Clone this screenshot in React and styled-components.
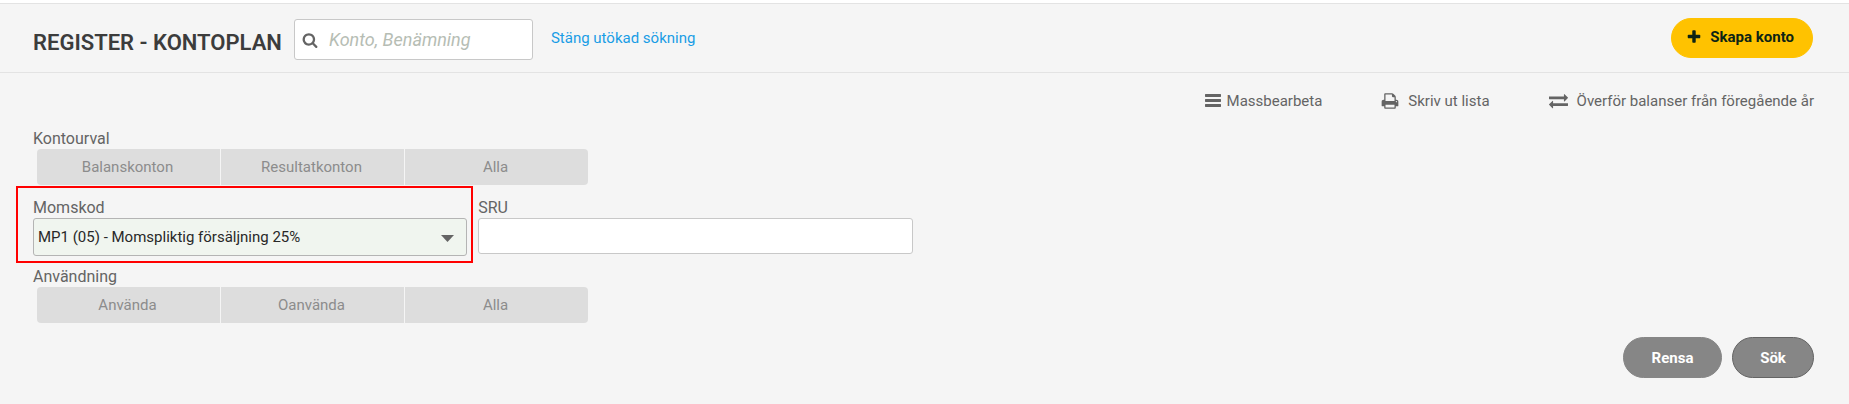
import React from 'react';
import styled, { createGlobalStyle } from 'styled-components';

const GlobalStyle = createGlobalStyle`
    * {
        box-sizing: border-box;
    }

    html {
        min-height: 100%;
        background: #f5f5f5;
    }

    body {
        margin: 0;
        color: #646464;
        font-family: Roboto, "Liberation Sans", sans-serif;
        font-size: 15px;
        line-height: 20px;
    }

    button, input, select {
        font: inherit;
        color: inherit;
    }
`;

const icons = {
    search: 'M1216 832q0-185-131.5-316.5t-316.5-131.5-316.5 131.5-131.5 316.5 131.5 316.5 316.5 131.5 316.5-131.5 131.5-316.5zm512 832q0 52-38 90t-90 38q-54 0-90-38l-343-342q-179 124-399 124-143 0-273.5-55.5t-225-150-150-225-55.5-273.5 55.5-273.5 150-225 225-150 273.5-55.5 273.5 55.5 225 150 150 225 55.5 273.5q0 220-124 399l343 343q37 37 37 90z',
    plus: 'M1600 736v192q0 40-28 68t-68 28h-416v416q0 40-28 68t-68 28h-192q-40 0-68-28t-28-68v-416h-416q-40 0-68-28t-28-68v-192q0-40 28-68t68-28h416v-416q0-40 28-68t68-28h192q40 0 68 28t28 68v416h416q40 0 68 28t28 68z',
    bars: 'M56 112h1680l56 56v224l-56 56h-1680l-56-56v-224zM56 672h1680l56 56v224l-56 56h-1680l-56-56v-224zM56 1232h1680l56 56v224l-56 56h-1680l-56-56v-224z',
    print: 'M448 1536h896v-256h-896v256zm0-640h896v-384h-160q-40 0-68-28t-28-68v-160h-640v640zm1152 64q0-26-19-45t-45-19-45 19-19 45 19 45 45 19 45-19 19-45zm128 0v416q0 13-9.5 22.5t-22.5 9.5h-224v160q0 40-28 68t-68 28h-960q-40 0-68-28t-28-68v-160h-224q-13 0-22.5-9.5t-9.5-22.5v-416q0-79 56.5-135.5t135.5-56.5h64v-544q0-40 28-68t68-28h672q40 0 88 20t76 48l152 152q28 28 48 76t20 88v256h64q79 0 135.5 56.5t56.5 135.5z',
    exchange: 'M1792 1184v192q0 13-9.5 22.5t-22.5 9.5h-1376v192q0 13-9.5 22.5t-22.5 9.5q-12 0-24-10l-319-320q-9-9-9-22 0-14 9-23l320-320q9-9 23-9 13 0 22.5 9.5t9.5 22.5v192h1376q13 0 22.5 9.5t9.5 22.5zm0-544q0 14-9 23l-320 320q-9 9-23 9-13 0-22.5-9.5t-9.5-22.5v-192h-1376q-13 0-22.5-9.5t-9.5-22.5v-192q0-13 9.5-22.5t22.5-9.5h1376v-192q0-14 9-23t23-9q12 0 24 10l319 319q9 9 9 23z',
};

const Svg = styled.svg`
    width: ${props => props.$size}px;
    height: ${props => props.$size}px;
    flex: none;
    fill: currentColor;
`;

const Icon = ({ name, size }) => (
    <Svg $size={size} viewBox='0 0 1792 1792' aria-hidden='true'>
        <path d={icons[name]} />
    </Svg>
);

const Header = styled.header`
    display: flex;
    align-items: flex-start;
    padding: 14px 36px 12px 33px;
    margin-top: 3px;
    border-top: 1px solid #e3e3e3;
    border-bottom: 1px solid #e3e3e3;
    box-shadow: 0 -3px #fff;
`;

const Title = styled.h1`
    margin: 11px 12px 0 0;
    color: #3c3c3c;
    font-size: 22px;
    font-weight: 600;
    line-height: 28px;
`;

const SearchBox = styled.label`
    display: flex;
    align-items: center;
    width: 239px;
    height: 41px;
    margin-top: 1px;
    padding: 0 7px;
    gap: 11px;
    background: #fff;
    border: 1px solid #c8c8c8;
    border-radius: 3px;

    input {
        flex: 1;
        min-width: 0;
        padding: 0;
        border: 0;
        outline: 0;
        background: none;
        font-size: 18px;
    }

    input::placeholder {
        color: #b6bdb4;
        font-style: italic;
        opacity: 1;
    }
`;

const SearchLink = styled.a`
    margin: 10px auto 0 18px;
    color: #199de5;
    text-decoration: none;
`;

const Pill = styled.button`
    display: flex;
    align-items: center;
    justify-content: center;
    min-width: ${props => props.$outlined ? 82 : 99}px;
    height: 41px;
    padding: 0 26px;
    color: #fff;
    background: #868686;
    border: 1px solid ${props => props.$outlined ? '#646464' : '#868686'};
    border-radius: 21px;
    font-weight: 700;
`;

const CreateButton = styled(Pill)`
    height: 40px;
    padding: 0 18px 2px 14px;
    gap: 8px;
    color: #0d2414;
    background: #ffc200;
    border-color: #ffc200;
`;

const Content = styled.main`
    padding: 18px 35px 26px 33px;
`;

const Actions = styled.nav`
    display: flex;
    justify-content: flex-end;
    gap: 59px;
    margin-bottom: 18px;

    svg {
        margin-bottom: 1px;
    }
`;

const Action = styled.a`
    display: flex;
    align-items: center;
    gap: ${props => props.$tight ? 6 : 9}px;
    color: inherit;
    text-decoration: none;
`;

const Row = styled.div`
    display: grid;
    grid-template-columns: repeat(4, 1fr);
    margin-bottom: 11px;
`;

const Field = styled.div`
    position: relative;
    padding-right: 11px;

    label {
        display: block;
        font-size: 16px;
    }
`;

const Highlight = styled.div`
    position: absolute;
    inset: -12px 5px -7px -17px;
    border: 2px solid #f00;
    pointer-events: none;
`;

const SelectBox = styled.div`
    display: grid;
    align-items: center;

    select, svg {
        grid-area: 1 / 1;
    }

    select {
        appearance: none;
        width: 100%;
        height: 38px;
        padding: 0 4px;
        color: #282828;
        background: #f0f5ef;
        border: 1px solid #b4b4b4;
        border-radius: 3px;
    }

    svg {
        justify-self: end;
        margin: 3px 13px 0 0;
        fill: #646464;
        pointer-events: none;
    }
`;

const TextInput = styled.input`
    display: block;
    width: 100%;
    height: 36px;
    padding: 0 4px;
    background: #fff;
    border: 1px solid #c8c8c8;
    border-radius: 3px;
`;

const Group = styled.fieldset`
    min-width: 0;
    margin: 0 0 13px;
    padding: 0;
    border: 0;

    legend {
        padding: 0;
        font-size: 16px;
    }
`;

const Segments = styled.div`
    display: grid;
    grid-template-columns: repeat(3, 1fr);
    gap: 1px;
    max-width: 551px;
    margin-left: 4px;
    border-radius: 4px;
    overflow: hidden;
`;

const Segment = styled.button`
    height: 36px;
    padding: 0 2px 0 0;
    border: 0;
    color: #8c8c8c;
    background: #ddd;
`;

const Footer = styled.div`
    display: flex;
    justify-content: flex-end;
    gap: 10px;
    padding-top: 1px;
`;

const SegmentGroup = ({ label, options }) => (
    <Group>
        <legend>{label}</legend>
        <Segments>
            {options.map(option => <Segment key={option} type='button'>{option}</Segment>)}
        </Segments>
    </Group>
);

const App = () => (
    <>
        <GlobalStyle />
        <Header>
            <Title>REGISTER - KONTOPLAN</Title>
            <SearchBox>
                <Icon name='search' size={16} />
                <input type='text' aria-label='Sök konto' placeholder='Konto, Benämning' />
            </SearchBox>
            <SearchLink href='#sokning'>Stäng utökad sökning</SearchLink>
            <CreateButton type='button'>
                <Icon name='plus' size={16} />
                Skapa konto
            </CreateButton>
        </Header>
        <Content>
            <Actions>
                <Action href='#massbearbeta' $tight>
                    <Icon name='bars' size={16} />
                    Massbearbeta
                </Action>
                <Action href='#skriv-ut'>
                    <Icon name='print' size={18} />
                    Skriv ut lista
                </Action>
                <Action href='#overfor'>
                    <Icon name='exchange' size={19} />
                    Överför balanser från föregående år
                </Action>
            </Actions>
            <SegmentGroup label='Kontourval' options={['Balanskonton', 'Resultatkonton', 'Alla']} />
            <Row>
                <Field>
                    <label htmlFor='momskod'>Momskod</label>
                    <SelectBox>
                        <select id='momskod' defaultValue='MP1'>
                            <option value='MP1'>MP1 (05) - Momspliktig försäljning 25%</option>
                        </select>
                        <svg width='13' height='7' viewBox='0 0 26 14' aria-hidden='true'>
                            <path d='M0 0h26L13 14z' />
                        </svg>
                    </SelectBox>
                    <Highlight />
                </Field>
                <Field>
                    <label htmlFor='sru'>SRU</label>
                    <TextInput id='sru' type='text' />
                </Field>
            </Row>
            <SegmentGroup label='Användning' options={['Använda', 'Oanvända', 'Alla']} />
            <Footer>
                <Pill type='button'>Rensa</Pill>
                <Pill type='button' $outlined>Sök</Pill>
            </Footer>
        </Content>
    </>
);

export default App;
